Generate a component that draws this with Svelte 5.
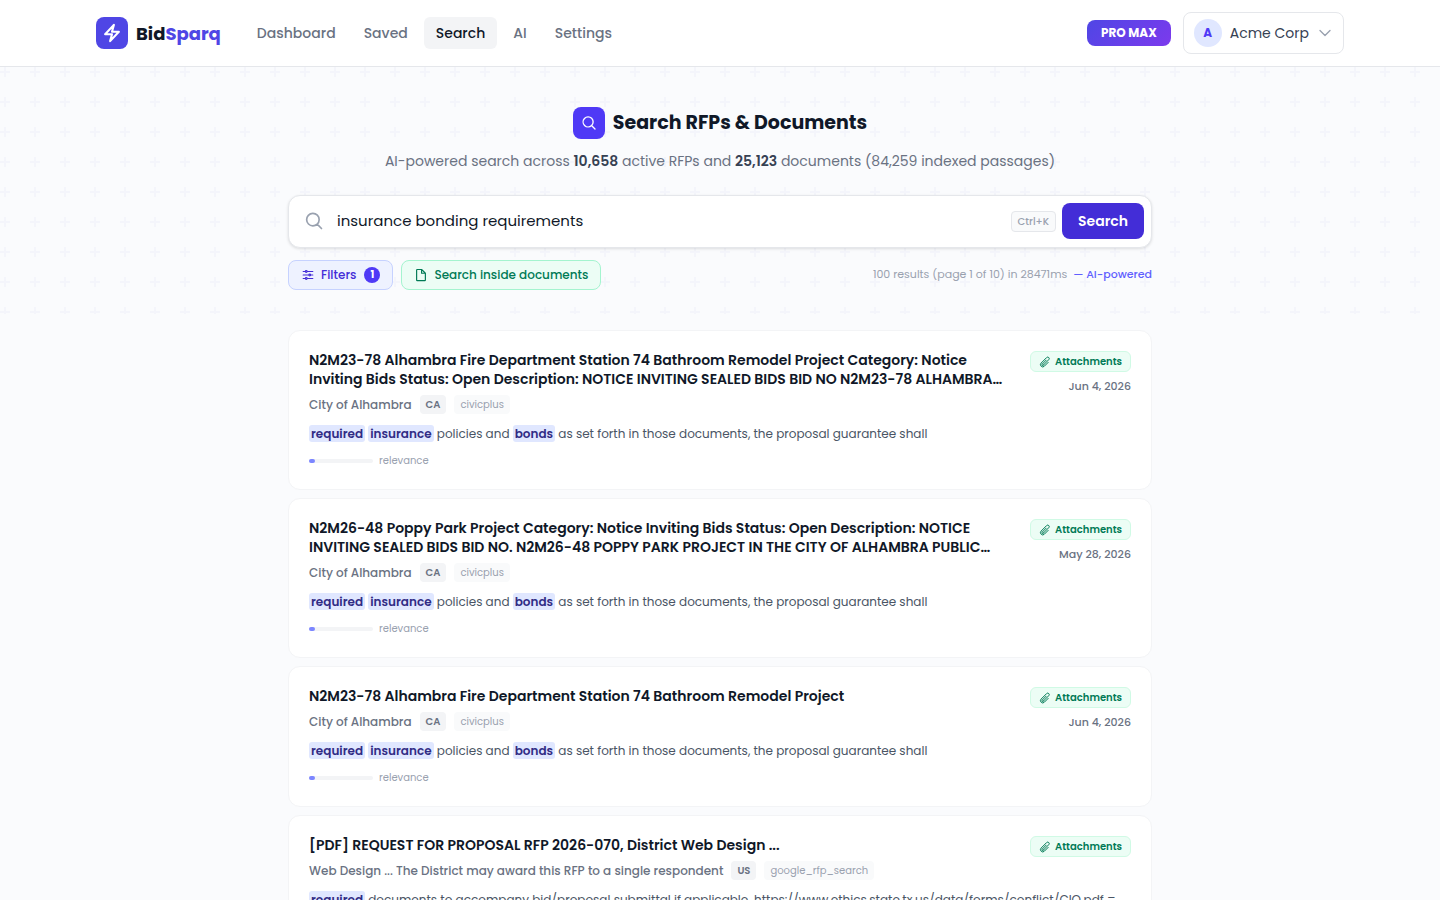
<script lang="ts">
	type Part = { text: string; hit?: boolean };

	interface Result {
		title: string;
		agency: string;
		state: string;
		source: string;
		date?: string;
		relevance: number;
		excerpt: Part[];
	}

	const links = ['Dashboard', 'Saved', 'Search', 'AI', 'Settings'];
	const current = 'Search';

	let query = $state('insurance bonding requirements');

	const bondExcerpt: Part[] = [
		{ text: 'required', hit: true },
		{ text: ' ' },
		{ text: 'insurance', hit: true },
		{ text: ' policies and ' },
		{ text: 'bonds', hit: true },
		{ text: ' as set forth in those documents, the proposal guarantee shall' }
	];

	const results: Result[] = [
		{
			title:
				'N2M23-78 Alhambra Fire Department Station 74 Bathroom Remodel Project Category: Notice Inviting Bids Status: Open Description: NOTICE INVITING SEALED BIDS BID NO N2M23-78 ALHAMBRA…',
			agency: 'City of Alhambra',
			state: 'CA',
			source: 'civicplus',
			date: 'Jun 4, 2026',
			relevance: 9,
			excerpt: bondExcerpt
		},
		{
			title:
				'N2M26-48 Poppy Park Project Category: Notice Inviting Bids Status: Open Description: NOTICE INVITING SEALED BIDS BID NO. N2M26-48 POPPY PARK PROJECT IN THE CITY OF ALHAMBRA PUBLIC…',
			agency: 'City of Alhambra',
			state: 'CA',
			source: 'civicplus',
			date: 'May 28, 2026',
			relevance: 9,
			excerpt: bondExcerpt
		},
		{
			title: 'N2M23-78 Alhambra Fire Department Station 74 Bathroom Remodel Project',
			agency: 'City of Alhambra',
			state: 'CA',
			source: 'civicplus',
			date: 'Jun 4, 2026',
			relevance: 9,
			excerpt: bondExcerpt
		},
		{
			title: '[PDF] REQUEST FOR PROPOSAL RFP 2026-070, District Web Design ...',
			agency: 'Web Design ... The District may award this RFP to a single respondent',
			state: 'US',
			source: 'google_rfp_search',
			relevance: 9,
			excerpt: [
				{ text: 'required', hit: true },
				{
					text: ' documents to accompany bid/proposal submittal if applicable. https://www.ethics.state.tx.us/data/forms/conflict/CIQ.pdf ='
				}
			]
		}
	];
</script>

<header class="topbar">
	<div class="topbar-inner">
		<a class="brand" href="/">
			<span class="brand-mark">
				<svg width="20" height="20" viewBox="0 0 24 24">
					<path d="M3.75 13.5l10.5-11.25L12 10.5h8.25L9.75 21.75 12 13.5H3.75z" />
				</svg>
			</span>
			<span class="brand-name">Bid<span class="accent">Sparq</span></span>
		</a>
		<nav class="nav">
			{#each links as link}
				<a href="/{link.toLowerCase()}" class:active={link === current}>{link}</a>
			{/each}
		</nav>
		<span class="plan">PRO MAX</span>
		<button class="account" type="button">
			<span class="avatar">A</span>
			<span>Acme Corp</span>
			<svg width="16" height="16" viewBox="0 0 24 24">
				<path d="M19.5 8.25l-7.5 7.5-7.5-7.5" />
			</svg>
		</button>
	</div>
</header>

<section class="hero">
	<div class="column">
		<div class="heading">
			<span class="heading-icon">
				<svg width="16" height="16" viewBox="0 0 24 24">
					<path d="M21 21l-5.2-5.2m0 0A7.5 7.5 0 105.2 5.2a7.5 7.5 0 0010.6 10.6z" />
				</svg>
			</span>
			<h1>Search RFPs &amp; Documents</h1>
		</div>
		<p class="lead">
			AI-powered search across <strong>10,658</strong> active RFPs and <strong>25,123</strong> documents
			(84,259 indexed passages)
		</p>

		<form class="search" onsubmit={(e) => e.preventDefault()}>
			<svg class="search-icon" width="20" height="20" viewBox="0 0 24 24">
				<path d="M21 21l-5.2-5.2m0 0A7.5 7.5 0 105.2 5.2a7.5 7.5 0 0010.6 10.6z" />
			</svg>
			<input type="text" aria-label="Search RFPs and documents" bind:value={query} />
			<kbd>Ctrl+K</kbd>
			<button type="submit">Search</button>
		</form>

		<div class="tools">
			<button class="chip filters" type="button">
				<svg width="14" height="14" viewBox="0 0 24 24">
					<path
						d="M10.5 6h9.75M10.5 6a1.5 1.5 0 11-3 0m3 0a1.5 1.5 0 10-3 0M3.75 6H7.5m3 12h9.75m-9.75 0a1.5 1.5 0 01-3 0m3 0a1.5 1.5 0 00-3 0m-3.75 0H7.5m9-6h3.75m-3.75 0a1.5 1.5 0 01-3 0m3 0a1.5 1.5 0 00-3 0m-9.75 0h9.75"
					/>
				</svg>
				Filters
				<span class="count">1</span>
			</button>
			<button class="chip inside" type="button">
				<svg width="14" height="14" viewBox="0 0 24 24">
					<path d="M13 2.5H5.5a1 1 0 00-1 1v17a1 1 0 001 1h13a1 1 0 001-1V9zM13 2.5V9h6.5" />
				</svg>
				Search inside documents
			</button>
			<p class="summary">
				100 results (page 1 of 10) in 28471ms <span class="powered">— AI-powered</span>
			</p>
		</div>
	</div>
</section>

<main class="column results">
	{#each results as result}
		<article class="card">
			<div class="card-head">
				<div class="card-title">
					<h2>{result.title}</h2>
					<div class="meta">
						<span>{result.agency}</span>
						<span class="state">{result.state}</span>
						<span class="source">{result.source}</span>
					</div>
				</div>
				<div class="card-side">
					<span class="attachments">
						<svg width="12" height="12" viewBox="0 0 24 24">
							<path
								d="M18.375 12.739l-7.693 7.693a4.5 4.5 0 01-6.364-6.364l10.94-10.94A3 3 0 1119.5 7.372L8.552 18.32m.009-.01l-.01.01m5.699-9.941l-7.81 7.81a1.5 1.5 0 002.112 2.13"
							/>
						</svg>
						Attachments
					</span>
					{#if result.date}
						<time>{result.date}</time>
					{/if}
				</div>
			</div>
			<p class="excerpt">
				{#each result.excerpt as part}{#if part.hit}<mark>{part.text}</mark>{:else}{part.text}{/if}{/each}
			</p>
			<div class="relevance">
				<span class="track"><span class="fill" style="width: {result.relevance}%"></span></span>
				relevance
			</div>
		</article>
	{/each}
</main>

<style>
	:global(body) {
		background: #fafbfd;
		color: #101828;
		font-family: Poppins, Inter, sans-serif;
		font-size: 14px;
	}

	h1,
	h2,
	p {
		margin: 0;
	}

	a {
		color: inherit;
		text-decoration: none;
	}

	button,
	input,
	kbd {
		font-family: inherit;
	}

	button {
		cursor: pointer;
	}

	svg {
		flex: none;
		fill: none;
		stroke: currentColor;
		stroke-width: 2;
		stroke-linecap: round;
		stroke-linejoin: round;
	}

	.topbar {
		background: #fff;
		border-bottom: 1px solid #e5e7eb;
	}

	.topbar-inner {
		display: flex;
		align-items: center;
		box-sizing: border-box;
		max-width: 1280px;
		height: 66px;
		margin: 0 auto;
		padding: 0 16px;
	}

	.brand {
		display: flex;
		align-items: center;
		gap: 8px;
		font-size: 18px;
		font-weight: 700;
	}

	.brand-mark,
	.heading-icon {
		display: grid;
		place-items: center;
		width: 32px;
		height: 32px;
		border-radius: 8px;
		background: #4f46e5;
		color: #fff;
	}

	.brand-mark svg {
		stroke-width: 2.5;
	}

	.accent {
		color: #4f46e5;
	}

	.nav {
		display: flex;
		gap: 4px;
		margin-left: 24px;
	}

	.nav a {
		padding: 0 12px;
		border-radius: 6px;
		color: #6a7282;
		font-weight: 500;
		line-height: 32px;
	}

	.nav .active {
		background: #f3f4f6;
		color: #101828;
	}

	.plan {
		margin-left: auto;
		padding: 0 14px;
		border-radius: 8px;
		background: linear-gradient(135deg, #4f46e5, #7c3aed);
		color: #fff;
		font-size: 12px;
		font-weight: 700;
		line-height: 26px;
	}

	.account {
		display: flex;
		align-items: center;
		gap: 8px;
		height: 42px;
		margin-left: 12px;
		padding: 0 10px;
		border: 1px solid #e5e7eb;
		border-radius: 8px;
		background: #fff;
		color: #364153;
		font-size: 14px;
	}

	.account svg {
		color: #99a1af;
	}

	.avatar {
		width: 28px;
		border-radius: 50%;
		background: #e0e7ff;
		color: #4f39f6;
		font-size: 12px;
		font-weight: 700;
		line-height: 28px;
	}

	.hero {
		height: 247px;
		background: url("data:image/svg+xml,%3Csvg xmlns='http://www.w3.org/2000/svg' width='30' height='30'%3E%3Cpath fill='%23f4f5fb' d='M6 4V0H4v4H0v2h4v4h2V6h4V4H6z'/%3E%3C/svg%3E");
	}

	.column {
		box-sizing: border-box;
		max-width: 896px;
		margin: 0 auto;
		padding: 40px 16px 0;
	}

	.heading {
		display: flex;
		align-items: center;
		justify-content: center;
		gap: 8px;
	}

	.heading-icon {
		background: #4f39f6;
	}

	h1 {
		font-size: 19px;
		font-weight: 700;
		line-height: 28px;
	}

	.lead {
		margin-top: 12px;
		color: #6a7282;
		line-height: 20px;
		text-align: center;
	}

	.lead strong {
		color: #364153;
		font-weight: 600;
	}

	.search {
		display: flex;
		align-items: center;
		box-sizing: border-box;
		height: 53px;
		margin-top: 24px;
		padding: 0 7px 1px 15px;
		border: 1px solid #e5e7eb;
		border-radius: 12px;
		background: #fff;
		box-shadow: 0 1px 3px rgb(0 0 0 / 0.12);
	}

	.search-icon {
		color: #99a1af;
	}

	.search input {
		flex: 1;
		min-width: 0;
		padding: 0 13px 2px;
		border: 0;
		outline: 0;
		background: transparent;
		color: #101828;
		font-size: 15px;
	}

	kbd {
		padding: 0 6px;
		border: 1px solid #e5e7eb;
		border-radius: 4px;
		background: #f9fafb;
		color: #99a1af;
		font-size: 10px;
		font-weight: 500;
		line-height: 19px;
	}

	.search button {
		height: 36px;
		margin-left: 6px;
		padding: 0 16px;
		border: 0;
		border-radius: 8px;
		background: #432dd7;
		color: #fff;
		font-size: 14px;
		font-weight: 600;
	}

	.tools {
		display: flex;
		align-items: flex-start;
		gap: 8px;
		margin-top: 12px;
	}

	.chip {
		display: flex;
		align-items: center;
		gap: 6px;
		height: 30px;
		padding: 0 12px;
		border: 1px solid;
		border-radius: 8px;
		font-size: 12px;
		font-weight: 500;
	}

	.filters {
		border-color: #c6d2ff;
		background: #eef2ff;
		color: #432dd7;
	}

	.inside {
		border-color: #a4f4cf;
		background: #ecfdf5;
		color: #007a55;
	}

	.count {
		width: 16px;
		margin-left: 2px;
		border-radius: 50%;
		background: #4f39f6;
		color: #fff;
		font-size: 10px;
		font-weight: 700;
		line-height: 16px;
	}

	.summary {
		margin-left: auto;
		color: #99a1af;
		font-size: 11px;
		line-height: 28px;
	}

	.powered {
		margin-left: 3px;
		color: #615fff;
		font-weight: 500;
	}

	.results {
		display: grid;
		gap: 8px;
		padding-top: 16px;
		padding-bottom: 40px;
	}

	.card {
		padding: 20px;
		border: 1px solid #f3f4f6;
		border-radius: 12px;
		background: #fff;
	}

	.card-head {
		display: flex;
		gap: 16px;
	}

	.card-title {
		flex: 1;
		min-width: 0;
	}

	h2 {
		font-size: 14px;
		font-weight: 600;
		line-height: 19px;
	}

	.meta {
		display: flex;
		align-items: center;
		gap: 8px;
		margin-top: 6px;
		color: #6a7282;
		font-size: 12px;
		font-weight: 500;
		line-height: 19px;
	}

	.state,
	.source {
		padding: 0 6px;
		border-radius: 4px;
		font-size: 10px;
	}

	.state {
		background: #f3f4f6;
		font-weight: 600;
	}

	.source {
		background: #f9fafb;
		color: #99a1af;
		font-weight: 400;
	}

	.excerpt {
		margin-top: 10px;
		color: #4a5565;
		font-size: 12px;
		line-height: 20px;
	}

	mark {
		padding: 0 2px;
		border-radius: 3px;
		background: #e0e7ff;
		color: #312c85;
		font-weight: 600;
	}

	.relevance {
		display: flex;
		align-items: center;
		gap: 6px;
		margin-top: 9px;
		color: #99a1af;
		font-size: 10px;
		line-height: 16px;
	}

	.track {
		width: 64px;
		height: 4px;
		border-radius: 2px;
		background: #f3f4f6;
	}

	.fill {
		display: block;
		height: 100%;
		border-radius: 2px;
		background: #7c86ff;
	}

	.card-side {
		display: flex;
		flex-direction: column;
		align-items: flex-end;
		gap: 6px;
	}

	.attachments {
		display: flex;
		align-items: center;
		gap: 4px;
		padding: 0 8px;
		border: 1px solid #d0fae5;
		border-radius: 6px;
		background: #ecfdf5;
		color: #007a55;
		font-size: 10px;
		font-weight: 600;
		line-height: 19px;
	}

	time {
		color: #6a7282;
		font-size: 11px;
		font-weight: 500;
		line-height: 16px;
	}
</style>
